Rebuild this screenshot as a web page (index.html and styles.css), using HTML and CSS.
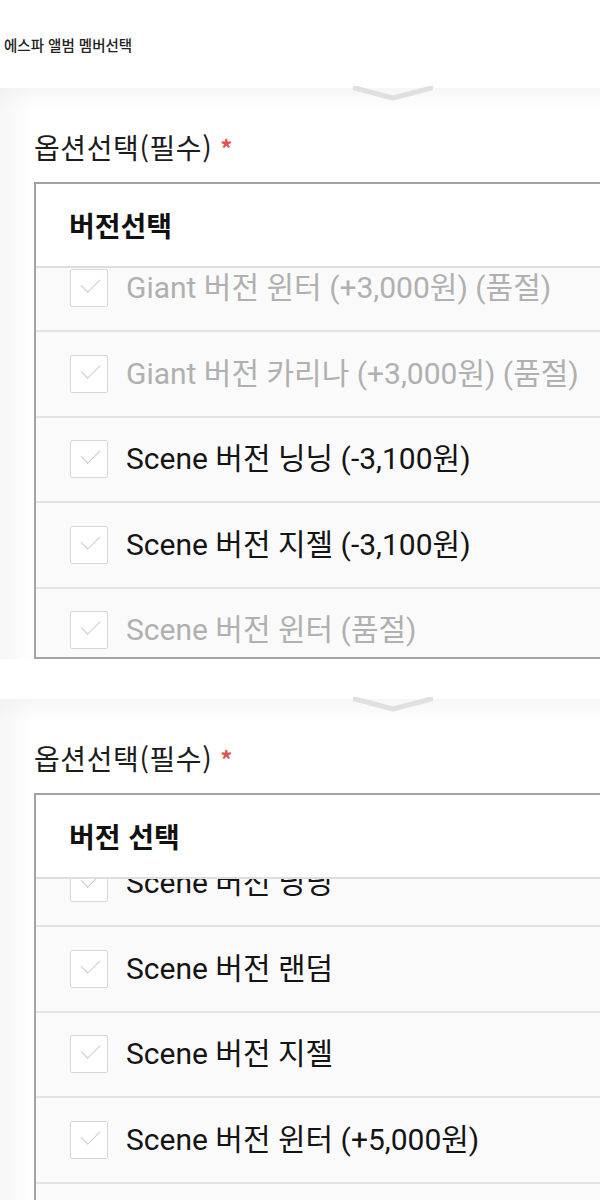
FILE: index.html
```html
<!DOCTYPE html>
<html lang="ko">
<head>
<meta charset="utf-8">
<title>에스파 앨범 멤버선택</title>
<link rel="stylesheet" href="styles.css">
</head>
<body>
<div class="page">
  <p class="page-title">에스파 앨범 멤버선택</p>

  <section class="shot shot-first">
    <svg class="chevron" width="80" height="16" viewBox="0 0 80 16" aria-hidden="true">
      <polyline points="2,2 40,12 78,2" fill="none" stroke="#e0e0e0" stroke-width="5" stroke-linejoin="round" stroke-linecap="round"/>
    </svg>
    <h2 class="opt-label">옵션선택(필수)<span class="req">*</span></h2>
    <div class="select-box">
      <div class="select-head">버전선택</div>
      <div class="select-list">
        <ul class="rows" style="margin-top:-21.5px">
          <li class="row off"><span class="check"></span><span class="txt">Giant 버전 윈터 (+3,000원) (품절)</span></li>
          <li class="row off"><span class="check"></span><span class="txt">Giant 버전 카리나 (+3,000원) (품절)</span></li>
          <li class="row"><span class="check"></span><span class="txt">Scene 버전 닝닝 (-3,100원)</span></li>
          <li class="row"><span class="check"></span><span class="txt">Scene 버전 지젤 (-3,100원)</span></li>
          <li class="row off"><span class="check"></span><span class="txt">Scene 버전 윈터 (품절)</span></li>
        </ul>
      </div>
    </div>
  </section>

  <section class="shot shot-second">
    <svg class="chevron" width="80" height="16" viewBox="0 0 80 16" aria-hidden="true">
      <polyline points="2,2 40,12 78,2" fill="none" stroke="#e0e0e0" stroke-width="5" stroke-linejoin="round" stroke-linecap="round"/>
    </svg>
    <h2 class="opt-label">옵션선택(필수)<span class="req">*</span></h2>
    <div class="select-box open">
      <div class="select-head">버전 선택</div>
      <div class="select-list">
        <ul class="rows" style="margin-top:-37.5px">
          <li class="row"><span class="check"></span><span class="txt">Scene 버전 닝닝</span></li>
          <li class="row"><span class="check"></span><span class="txt">Scene 버전 랜덤</span></li>
          <li class="row"><span class="check"></span><span class="txt">Scene 버전 지젤</span></li>
          <li class="row"><span class="check"></span><span class="txt">Scene 버전 윈터 (+5,000원)</span></li>
          <li class="row"><span class="check"></span><span class="txt">Scene 버전 카리나</span></li>
        </ul>
      </div>
    </div>
  </section>
</div>
</body>
</html>
```
FILE: styles.css
```css
html, body {
  margin: 0;
  padding: 0;
  background: #fff;
}

.page {
  width: 600px;
  height: 1200px;
  overflow: hidden;
  font-family: "Roboto", "Noto Sans CJK KR", sans-serif;
  color: #111;
}

.page-title {
  margin: 0;
  padding: 37px 0 0 4px;
  height: 88px;
  box-sizing: border-box;
  font-family: "Noto Sans CJK KR", sans-serif;
  font-size: 14.5px;
  line-height: 16px;
  font-weight: 500;
  color: #222;
}

.shot {
  display: flex;
  flex-direction: column;
  background:
    linear-gradient(180deg, rgba(240,240,240,0.6) 0, rgba(255,255,255,0) 22px),
    linear-gradient(90deg, rgba(242,242,242,0.7) 0, rgba(255,255,255,0) 32px);
}

.shot-second {
  margin-top: 40px;
}

.chevron {
  display: block;
  margin-left: 353px;
  margin-top: -2px;
}

.opt-label {
  margin: 30px 0 0 34px;
  font-family: "Noto Sans CJK KR", sans-serif;
  font-size: 28px;
  line-height: 30px;
  font-weight: 400;
  color: #1c1c1c;
  letter-spacing: 0.6px;
}

.req {
  color: #e0524f;
  font-size: 24px;
  font-weight: 700;
  vertical-align: 1px;
  margin-left: 8px;
}

.select-box {
  margin: 19px 0 0 34px;
  width: 600px;
  border: 2px solid #a3a3a3;
  background: #fff;
}

.shot-second .select-box {
  margin-top: 19px;
}

.select-head {
  height: 84px;
  box-sizing: border-box;
  padding-left: 33px;
  display: flex;
  align-items: center;
  font-family: "Noto Sans CJK KR", sans-serif;
  font-size: 28px;
  font-weight: 700;
  color: #111;
  border-bottom: 2px solid #dedede;
}

.select-list {
  height: 389px;
  overflow: hidden;
  background: #fafafa;
}

.select-box.open .select-list {
  height: 400px;
}

.rows {
  list-style: none;
  margin: 0;
  padding: 0;
}

.row {
  height: 85.5px;
  box-sizing: border-box;
  border-bottom: 2px solid #e3e3e3;
  display: flex;
  align-items: center;
  gap: 18px;
  padding-left: 34px;
  background: #fafafa;
}

.check {
  flex: none;
  width: 38px;
  height: 38px;
  box-sizing: border-box;
  border: 1.5px solid #d8d8d8;
  border-radius: 2px;
  background: #fff;
  position: relative;
}

.check::after {
  content: "";
  position: absolute;
  left: 11px;
  top: 8px;
  width: 16px;
  height: 9px;
  border-left: 1.5px solid #cacaca;
  border-bottom: 1.5px solid #cacaca;
  transform: rotate(-45deg) scaleX(1.05);
  transform-origin: center;
}

.txt {
  font-size: 30px;
  line-height: 34px;
  white-space: nowrap;
  color: #141414;
  letter-spacing: 0;
}

.row.off .txt {
  color: #b0b0b0;
}
```
